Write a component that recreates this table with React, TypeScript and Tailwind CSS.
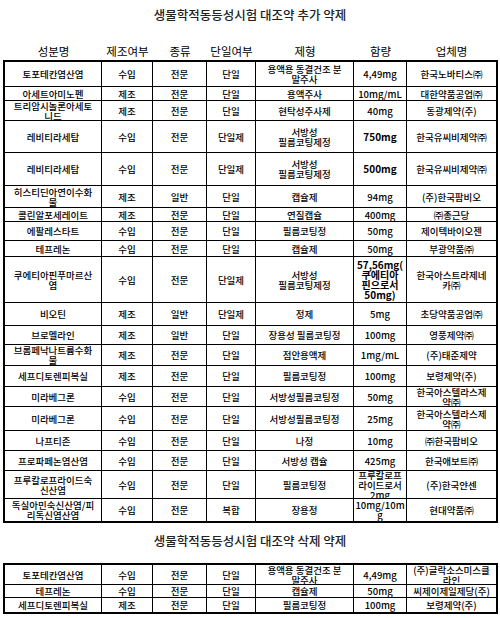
import React from 'react'

type Row = { c: string[]; h: string; bold?: boolean }

const headers = ['성분명', '제조여부', '종류', '단일여부', '제형', '함량', '업체명']

const added: Row[] = [
  { c: ['토포테칸염산염', '수입', '전문', '단일', '용액용 동결건조 분\n말주사', '4,49mg', '한국노바티스㈜'], h: 'h-[25px]' },
  { c: ['아세트아미노펜', '제조', '전문', '단일', '용액주사', '10mg/mL', '대한약품공업㈜'], h: 'h-[14px]' },
  { c: ['트리암시놀론아세토\n니드', '제조', '전문', '단일', '현탁성주사제', '40mg', '동광제약(주)'], h: 'h-[20px]' },
  { c: ['레비티라세탐', '수입', '전문', '단일제', '서방성\n필름코팅제정', '750mg', '한국유씨비제약㈜'], h: 'h-[32px]', bold: true },
  { c: ['레비티라세탐', '수입', '전문', '단일제', '서방성\n필름코팅제정', '500mg', '한국유씨비제약㈜'], h: 'h-[33px]', bold: true },
  { c: ['히스티딘아연이수화\n물', '제조', '일반', '단일', '캡슐제', '94mg', '(주)한국팜비오'], h: 'h-[22px]' },
  { c: ['콜린알포세레이트', '제조', '전문', '단일', '연질캡슐', '400mg', '㈜종근당'], h: 'h-[14px]' },
  { c: ['에팔레스타트', '수입', '전문', '단일', '필름코팅정', '50mg', '제이텍바이오젠'], h: 'h-[19px]' },
  { c: ['테프레논', '수입', '전문', '단일', '캡슐제', '50mg', '부광약품㈜'], h: 'h-[16px]' },
  { c: ['쿠에티아핀푸마르산\n염', '수입', '전문', '단일제', '서방성\n필름코팅제정', '57,56mg(\n쿠에티아\n핀으로서\n50mg)', '한국아스트라제네\n카㈜'], h: 'h-[46px]', bold: true },
  { c: ['비오틴', '제조', '일반', '단일제', '정제', '5mg', '초당약품공업㈜'], h: 'h-[23px]' },
  { c: ['브로멜라인', '제조', '일반', '단일', '장용성 필름코팅정', '100mg', '영풍제약㈜'], h: 'h-[19px]' },
  { c: ['브롬페낙나트륨수화\n물', '제조', '전문', '단일', '점안용액제', '1mg/mL', '(주)태준제약'], h: 'h-[21px]' },
  { c: ['세프디토렌피복실', '제조', '전문', '단일', '필름코팅정', '100mg', '보령제약(주)'], h: 'h-[21px]' },
  { c: ['미라베그론', '수입', '전문', '단일', '서방성필름코팅정', '50mg', '한국아스텔라스제\n약㈜'], h: 'h-[20px]' },
  { c: ['미라베그론', '수입', '전문', '단일', '서방성필름코팅정', '25mg', '한국아스텔라스제\n약㈜'], h: 'h-[24px]' },
  { c: ['나프티존', '수입', '전문', '단일', '나정', '10mg', '㈜한국팜비오'], h: 'h-[20px]' },
  { c: ['프로파페논염산염', '수입', '전문', '단일', '서방성 캡슐', '425mg', '한국애보트㈜'], h: 'h-[20px]' },
  { c: ['프루칼로프라이드숙\n신산염', '수입', '전문', '단일', '필름코팅정', '프루칼로프\n라이드로서\n2mg', '(주)한국얀센'], h: 'h-[28px]' },
  { c: ['독실아민숙신산염/피\n리독신염산염', '수입', '전문', '복합', '장용정', '10mg/10m\ng', '현대약품㈜'], h: 'h-[22px]' },
]

const removed: Row[] = [
  { c: ['토포테칸염산염', '수입', '전문', '단일', '용액용 동결건조 분\n말주사', '4,49mg', '(주)글락소스미스클\n라인'], h: 'h-[20px]' },
  { c: ['테프레논', '수입', '전문', '단일', '캡슐제', '50mg', '씨제이제일제당(주)'], h: 'h-[13px]' },
  { c: ['세프디토렌피복실', '제조', '전문', '단일', '필름코팅정', '100mg', '보령제약(주)'], h: 'h-[14px]' },
]

const cols = 'grid grid-cols-[97px_51px_54px_49px_98px_53px_1fr]'

function Title({ children }: { children: React.ReactNode }) {
  return (
    <div className="h-[30px] flex items-center justify-center text-[12.5px] text-[#222]">
      {children}
    </div>
  )
}

function DataTable({ rows }: { rows: Row[] }) {
  return (
    <div className="ml-[3px] w-[495px] border-2 border-black">
      {rows.map((r, i) => (
        <div key={i} className={`${cols} ${r.h} ${i < rows.length - 1 ? 'border-b border-black' : ''}`}>
          {r.c.map((t, j) => (
            <div
              key={j}
              className={`flex items-center justify-center overflow-hidden text-center whitespace-pre-line leading-[10px] ${
                j < 6 ? 'border-r border-black' : ''
              } ${r.bold && j === 5 ? 'font-bold text-[10px]' : ''}`}
            >
              {t}
            </div>
          ))}
        </div>
      ))}
    </div>
  )
}

export default function App() {
  return (
    <div className="w-[500px] h-[618px] bg-white text-black overflow-hidden font-['Noto_Sans_CJK_KR','Liberation_Sans',sans-serif] text-[9.5px] font-medium">
      <Title>생물학적동등성시험 대조약 추가 약제</Title>

      {/* header row, no borders */}
      <div className={`${cols} ml-[5px] w-[491px] mt-[14px] h-[16px] items-center text-[11.5px] font-normal`}>
        {headers.map((h) => (
          <div key={h} className="text-center leading-none">{h}</div>
        ))}
      </div>

      <DataTable rows={added} />

      <div className="mt-[3px]">
        <Title>생물학적동등성시험 대조약 삭제 약제</Title>
      </div>

      <div className="mt-[7px]">
        <DataTable rows={removed} />
      </div>
    </div>
  )
}
